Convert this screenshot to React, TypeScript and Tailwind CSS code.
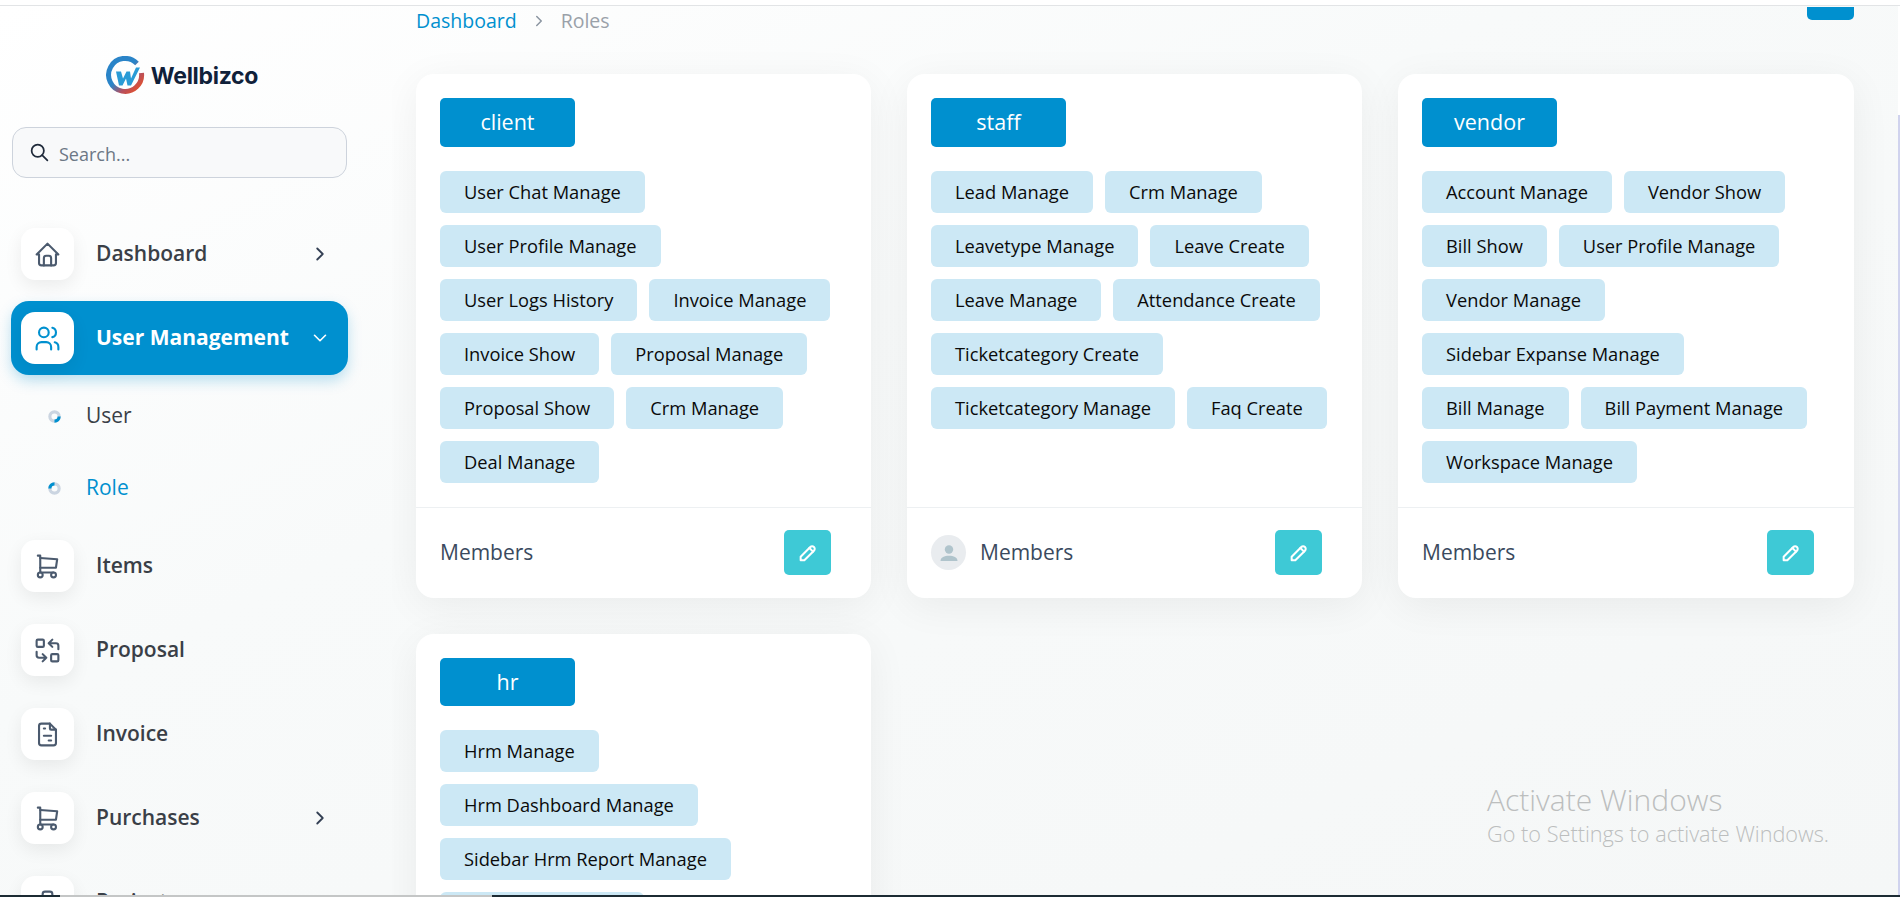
import { ReactNode } from "react";
import {
  TbBriefcase,
  TbChevronDown,
  TbChevronRight,
  TbFileInvoice,
  TbHome,
  TbPencil,
  TbReplace,
  TbSearch,
  TbShoppingCart,
  TbUsers,
} from "react-icons/tb";

const roles = [
  {
    name: "client",
    avatar: false,
    perms: ["User Chat Manage", "User Profile Manage", "User Logs History", "Invoice Manage", "Invoice Show", "Proposal Manage", "Proposal Show", "Crm Manage", "Deal Manage"],
  },
  {
    name: "staff",
    avatar: true,
    perms: ["Lead Manage", "Crm Manage", "Leavetype Manage", "Leave Create", "Leave Manage", "Attendance Create", "Ticketcategory Create", "Ticketcategory Manage", "Faq Create"],
  },
  {
    name: "vendor",
    avatar: false,
    perms: ["Account Manage", "Vendor Show", "Bill Show", "User Profile Manage", "Vendor Manage", "Sidebar Expanse Manage", "Bill Manage", "Bill Payment Manage", "Workspace Manage"],
  },
  {
    name: "hr",
    avatar: false,
    perms: ["Hrm Manage", "Hrm Dashboard Manage", "Sidebar Hrm Report Manage", "Employee Manage"],
  },
];

function Logo() {
  return (
    <div className="flex items-center justify-center gap-[5px] pr-[28px]">
      <svg width="40" height="40" viewBox="0 0 40 40">
        <defs>
          <linearGradient id="ring" x1="0" y1="0" x2="1" y2="1">
            <stop offset="0.45" stopColor="#2a84c8" />
            <stop offset="0.7" stopColor="#b5505f" />
            <stop offset="1" stopColor="#f0501e" />
          </linearGradient>
        </defs>
        <path d="M31 7.500A16.500 16.500 0 1 0 35.500 17" fill="none" stroke="url(#ring)" strokeWidth="5" />
        <path d="M10 15.500h5l2 7 3.500-7h3.500l1 7 5-11h4l-9 18h-3.500l-1.500-7-3.500 7h-3.500z" fill="#2a9bd6" />
      </svg>
      <span className="font-['Inter',sans-serif] text-[23px] font-bold tracking-[-0.3px] text-[#10213a]">Wellbizco</span>
    </div>
  );
}

function Tile({ children, color = "text-[#4b5a6e]" }: { children: ReactNode; color?: string }) {
  return (
    <div className={`flex h-[52px] w-[53px] shrink-0 items-center justify-center rounded-[14px] bg-white shadow-[0_6px_18px_rgba(0,0,0,0.07)] ${color}`}>
      {children}
    </div>
  );
}

function NavItem({ icon, label, chevron }: { icon: ReactNode; label: string; chevron?: boolean }) {
  return (
    <div className="flex h-[52px] w-[331px] items-center pl-[21px]">
      <Tile>{icon}</Tile>
      <span className="ml-[22px] text-[21px] font-semibold text-[#3a3f47]">{label}</span>
      {chevron && <TbChevronRight size={22} strokeWidth={2} className="ml-auto text-[#344054]" />}
    </div>
  );
}

function SubItem({ label, active, rotate }: { label: string; active?: boolean; rotate: string }) {
  return (
    <div className="flex h-[72px] items-center pl-[48px]">
      <svg width="13" height="13" viewBox="0 0 14 14" className={rotate}>
        <circle cx="7" cy="7" r="5" fill="none" stroke="#cbd5e1" strokeWidth="3.4" />
        <path d="M12 7A5 5 0 0 1 7 12" fill="none" stroke="#0090cf" strokeWidth="3.4" />
      </svg>
      <span className={`ml-[25px] text-[21px] ${active ? "text-[#0090cf]" : "text-[#3a3f47]"}`}>{label}</span>
    </div>
  );
}

function Sidebar() {
  return (
    <aside className="w-[392px] shrink-0 overflow-hidden">
      <div className="pt-[50px]">
        <Logo />
      </div>
      <div className="ml-[12px] mt-[31px] flex h-[51px] w-[335px] items-center rounded-[14px] border border-[#cdd3dc] bg-[#f8f9fa] pl-[16px]">
        <TbSearch size={21} className="text-[#1f2a3a]" />
        <span className="ml-[9px] pt-[3px] text-[18px] text-[#6c7785]">Search...</span>
      </div>
      <div className="mt-[50px]">
        <NavItem icon={<TbHome size={29} strokeWidth={1.75} />} label="Dashboard" chevron />
        <div className="ml-[11px] mt-[21px] flex h-[74px] w-[337px] items-center rounded-[18px] bg-[#0090cf] pl-[10px] pr-[17px] shadow-[0_6px_14px_rgba(0,144,207,0.25)]">
          <Tile color="text-[#0090cf]">
            <TbUsers size={29} strokeWidth={1.75} />
          </Tile>
          <span className="ml-[22px] text-[21px] font-bold text-white">User Management</span>
          <TbChevronDown size={22} strokeWidth={1.75} className="ml-auto text-white" />
        </div>
        <div className="mt-[5px]">
          <SubItem label="User" rotate="" />
          <SubItem label="Role" active rotate="rotate-180" />
        </div>
        <div className="mt-[16px] flex flex-col gap-[32px]">
          <NavItem icon={<TbShoppingCart size={29} strokeWidth={1.75} />} label="Items" />
          <NavItem icon={<TbReplace size={29} strokeWidth={1.75} />} label="Proposal" />
          <NavItem icon={<TbFileInvoice size={29} strokeWidth={1.75} />} label="Invoice" />
          <NavItem icon={<TbShoppingCart size={29} strokeWidth={1.75} />} label="Purchases" chevron />
          <NavItem icon={<TbBriefcase size={29} strokeWidth={1.75} />} label="Projects" />
        </div>
      </div>
    </aside>
  );
}

function RoleCard({ role }: { role: (typeof roles)[number] }) {
  return (
    <div className="flex flex-col rounded-[18px] bg-white shadow-[0_8px_40px_rgba(0,0,0,0.06)]">
      <div className="flex-1 p-[24px]">
        <div className="flex h-[48.6px] w-[135px] items-center justify-center rounded-[5px] bg-[#0090cf] text-[21.5px] text-white">
          {role.name}
        </div>
        <div className="mt-[24px] flex flex-wrap gap-[12px]">
          {role.perms.map((p) => (
            <span key={p} className="flex h-[42px] items-center rounded-[6px] bg-[#cce8f5] px-[24px] text-[18.3px] text-[#0a0a0a]">
              {p}
            </span>
          ))}
        </div>
      </div>
      <div className="flex h-[91px] items-center border-t border-[#edf0f2] pl-[24px] pr-[40px]">
        {role.avatar && (
          <div className="mr-[14px] flex h-[35px] w-[35px] items-center justify-center rounded-full bg-[#e9ecef]">
            <svg width="20" height="20" viewBox="0 0 20 20" fill="#b0c4cc">
              <circle cx="10" cy="6.500" r="4.200" />
              <path d="M1.500 18c0-3.600 4-5.200 8.500-5.200s8.500 1.600 8.500 5.200z" />
            </svg>
          </div>
        )}
        <span className="text-[21px] text-[#3a4a5e]">Members</span>
        <div className="ml-auto flex h-[45px] w-[47px] items-center justify-center rounded-[5px] bg-[#3ec9d6] text-white">
          <TbPencil size={22} strokeWidth={2.2} />
        </div>
      </div>
    </div>
  );
}

export default function App() {
  return (
    <div className="relative flex h-[897px] w-[1900px] flex-col overflow-hidden bg-white font-['Open_Sans',sans-serif]">
      <div className="h-[6px] shrink-0 border-b border-[#e2e4e6] bg-white" />
      <div className="flex min-h-0 flex-1 bg-gradient-to-br from-white via-[#f8fafa] via-40% to-[#f5f7f7]">
        <Sidebar />
        <main className="min-w-0 flex-1 overflow-hidden pl-[24px] pr-[46px]">
          <div className="flex h-[68px] items-start justify-between">
            <div className="flex items-center text-[19.5px]">
              <span className="text-[#0090cf]">Dashboard</span>
              <TbChevronRight size={18} className="mx-[13px] text-[#8b95a1]" />
              <span className="text-[#9aa1a9]">Roles</span>
            </div>
            <div className="mt-[1px] h-[13px] w-[47px] rounded-b-[5px] bg-[#0090cf]" />
          </div>
          <div className="grid grid-cols-[455px_455px_456px] gap-[36px]">
            {roles.map((r) => (
              <RoleCard key={r.name} role={r} />
            ))}
          </div>
        </main>
      </div>
      {/* taskbar edge and scrollbar from the capture, they sit over the page */}
      <div className="absolute bottom-0 left-0 flex h-[2px] w-full">
        <div className="w-[60px] bg-[#1c2b33]" />
        <div className="w-[432px] bg-[#c4c6c6]" />
        <div className="flex-1 bg-[#1c2b33]" />
      </div>
      <div className="absolute bottom-[2px] right-0 top-[6px] flex w-[2px] flex-col bg-white">
        <div className="mt-[109px] flex-1 bg-[#d0d3ee]" />
      </div>
      <div className="absolute left-[1487px] top-[781px] font-light text-[#bcbebe]">
        <div className="text-[30px] leading-[38px]">Activate Windows</div>
        <div className="text-[21.700px] leading-[30px]">Go to Settings to activate Windows.</div>
      </div>
    </div>
  );
}
